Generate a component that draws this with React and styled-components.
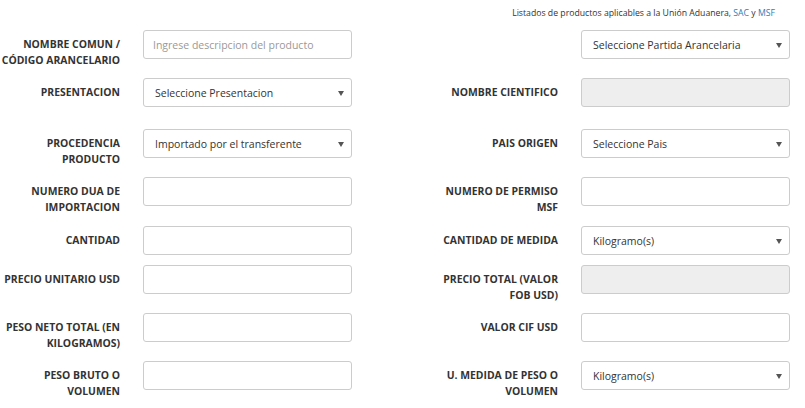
import React from "react";
import styled, { createGlobalStyle } from "styled-components";

const Global = createGlobalStyle`
  body {
    margin: 0;
    background: #fff;
    font-family: "Open Sans", "DejaVu Sans", sans-serif;
    color: #333;
  }
`;

const Page = styled.div`
  width: 805px;
  padding-top: 5px;
`;

const Note = styled.p`
  margin: 0 30px 0 0;
  text-align: right;
  font-size: 8.7px;
  line-height: 16px;
  color: #333;

  a {
    color: #337ab7;
    text-decoration: none;
  }
`;

const Form = styled.form`
  margin-top: 9px;
`;

const Row = styled.div`
  display: flex;
  column-gap: 86px;
  height: ${(p) => p.h}px;
`;

const Field = styled.div`
  display: grid;
  grid-template-columns: 120px 209px;
  column-gap: 23px;
  align-items: start;
`;

const Label = styled.label`
  display: block;
  padding-top: 6px;
  text-align: right;
  font-size: 10.4px;
  font-weight: 700;
  line-height: 16px;
  color: #333;
`;

const Input = styled.input`
  box-sizing: border-box;
  width: 209px;
  height: 29px;
  padding: 0 9px;
  border: 1px solid #ccc;
  border-radius: 3px;
  background: ${(p) => (p.disabled ? "#eee" : "#fff")};
  font-family: inherit;
  font-size: 10.5px;
  color: #555;
  outline: none;

  &::placeholder {
    color: #999;
  }
`;

const SelectBox = styled.div`
  box-sizing: border-box;
  width: 209px;
  height: 29px;
  display: flex;
  align-items: center;
  justify-content: space-between;
  padding: 0 7px 0 11px;
  border: 1px solid #ccc;
  border-radius: 3px;
  background: #fff;
  font-size: 10.5px;
  color: #333;
`;

const Arrow = styled.span`
  width: 0;
  height: 0;
  border-left: 3px solid transparent;
  border-right: 3px solid transparent;
  border-top: 5px solid #555;
  margin-top: 1px;
`;

const Select = ({ children }) => (
  <SelectBox>
    <span>{children}</span>
    <Arrow />
  </SelectBox>
);

export default function App() {
  return (
    <Page>
      <Global />
      <Note>
        Listados de productos aplicables a la Unión Aduanera, <a href="#">SAC</a> y{" "}
        <a href="#">MSF</a>
      </Note>
      <Form>
        <Row h={48}>
          <Field>
            <Label>NOMBRE COMUN / CÓDIGO ARANCELARIO</Label>
            <Input placeholder="Ingrese descripcion del producto" />
          </Field>
          <Field>
            <Label />
            <Select>Seleccione Partida Arancelaria</Select>
          </Field>
        </Row>
        <Row h={51}>
          <Field>
            <Label>PRESENTACION</Label>
            <Select>Seleccione Presentacion</Select>
          </Field>
          <Field>
            <Label>NOMBRE CIENTIFICO</Label>
            <Input disabled />
          </Field>
        </Row>
        <Row h={48}>
          <Field>
            <Label>PROCEDENCIA PRODUCTO</Label>
            <Select>Importado por el transferente</Select>
          </Field>
          <Field>
            <Label>PAIS ORIGEN</Label>
            <Select>Seleccione Pais</Select>
          </Field>
        </Row>
        <Row h={49}>
          <Field>
            <Label>NUMERO DUA DE IMPORTACION</Label>
            <Input />
          </Field>
          <Field>
            <Label>NUMERO DE PERMISO MSF</Label>
            <Input />
          </Field>
        </Row>
        <Row h={39}>
          <Field>
            <Label>CANTIDAD</Label>
            <Input />
          </Field>
          <Field>
            <Label>CANTIDAD DE MEDIDA</Label>
            <Select>Kilogramo(s)</Select>
          </Field>
        </Row>
        <Row h={48}>
          <Field>
            <Label>PRECIO UNITARIO USD</Label>
            <Input />
          </Field>
          <Field>
            <Label>PRECIO TOTAL (VALOR FOB USD)</Label>
            <Input disabled />
          </Field>
        </Row>
        <Row h={48}>
          <Field>
            <Label>PESO NETO TOTAL (EN KILOGRAMOS)</Label>
            <Input />
          </Field>
          <Field>
            <Label>VALOR CIF USD</Label>
            <Input />
          </Field>
        </Row>
        <Row h={48}>
          <Field>
            <Label>PESO BRUTO O VOLUMEN</Label>
            <Input />
          </Field>
          <Field>
            <Label>U. MEDIDA DE PESO O VOLUMEN</Label>
            <Select>Kilogramo(s)</Select>
          </Field>
        </Row>
      </Form>
    </Page>
  );
}
